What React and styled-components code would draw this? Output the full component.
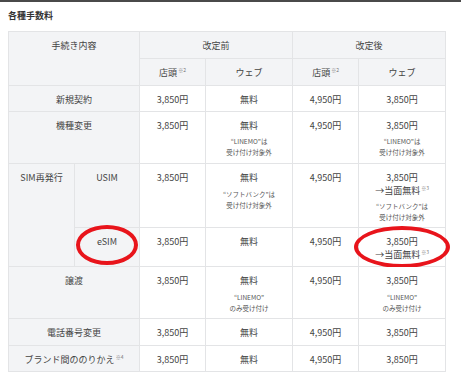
import React from 'react';
import styled, { createGlobalStyle } from 'styled-components';

const GlobalStyle = createGlobalStyle`
  body {
    margin: 0;
    background: #ffffff;
    font-family: "Noto Sans CJK JP", "Noto Sans", sans-serif;
    color: #3a3a3a;
  }
`;

const Page = styled.div`
  width: 461px;
  height: 380px;
  border-top: 2px solid #4a4a4a;
  box-sizing: border-box;
  padding: 7px 16px 0 8px;
  overflow: hidden;
`;

const Title = styled.h2`
  margin: 0 0 8px;
  font-size: 9px;
  line-height: 14px;
  font-weight: 700;
  color: #333;
`;

const Table = styled.table`
  width: 437px;
  border-collapse: collapse;
  table-layout: fixed;
`;

const Row = styled.tr`
  height: ${(p) => p.$h}px;
`;

const Cell = styled.td`
  position: relative;
  box-sizing: border-box;
  padding: ${(p) => (p.$head ? 7 : 7)}px 2px 0;
  vertical-align: top;
  text-align: center;
  font-size: 9px;
  line-height: 13px;
  color: #444;
  background: ${(p) => (p.$gray ? '#f3f4f6' : '#ffffff')};
  border: 1px solid #e3e4e6;
  white-space: nowrap;
`;

const Sup = styled.sup`
  font-size: 5px;
  line-height: 0;
  vertical-align: 4px;
  margin-left: 1px;
  color: #777;
`;

const Note = styled.div`
  margin-top: ${(p) => p.$gap || 5}px;
  font-size: 6.5px;
  line-height: 10.5px;
  color: #555;
`;

const Ring = styled.span`
  position: absolute;
  top: ${(p) => p.$t}px;
  left: ${(p) => p.$l}px;
  right: ${(p) => p.$r}px;
  bottom: ${(p) => p.$b}px;
  border: 4px solid #e8141b;
  border-radius: 50%;
  pointer-events: none;
`;

const Web = ({ note, gap }) => (
  <>
    無料
    {note && <Note $gap={gap}>{note}</Note>}
  </>
);

export default function App() {
  const linemoOut = (
    <>
      “LINEMO”は<br />受け付け対象外
    </>
  );
  const sbOut = (
    <>
      “ソフトバンク”は<br />受け付け対象外
    </>
  );
  const linemoOnly = (
    <>
      “LINEMO”<br />のみ受け付け
    </>
  );

  return (
    <>
      <GlobalStyle />
      <Page>
        <Title>各種手数料</Title>
        <Table>
          <colgroup>
            <col style={{ width: 66 }} />
            <col style={{ width: 65 }} />
            <col style={{ width: 66 }} />
            <col style={{ width: 87 }} />
            <col style={{ width: 66 }} />
            <col style={{ width: 87 }} />
          </colgroup>
          <tbody>
            <Row $h={27}>
              <Cell $gray colSpan={2} rowSpan={2}>手続き内容</Cell>
              <Cell $gray colSpan={2}>改定前</Cell>
              <Cell $gray colSpan={2}>改定後</Cell>
            </Row>
            <Row $h={27}>
              <Cell $gray>店頭<Sup>※2</Sup></Cell>
              <Cell $gray>ウェブ</Cell>
              <Cell $gray>店頭<Sup>※2</Sup></Cell>
              <Cell $gray>ウェブ</Cell>
            </Row>
            <Row $h={26}>
              <Cell $gray colSpan={2}>新規契約</Cell>
              <Cell>3,850円</Cell>
              <Cell>無料</Cell>
              <Cell>4,950円</Cell>
              <Cell>3,850円</Cell>
            </Row>
            <Row $h={52}>
              <Cell $gray colSpan={2}>機種変更</Cell>
              <Cell>3,850円</Cell>
              <Cell><Web note={linemoOut} gap={4} /></Cell>
              <Cell>4,950円</Cell>
              <Cell>3,850円<Note $gap={4}>{linemoOut}</Note></Cell>
            </Row>
            <Row $h={64}>
              <Cell $gray rowSpan={2}>SIM再発行</Cell>
              <Cell $gray>USIM</Cell>
              <Cell>3,850円</Cell>
              <Cell><Web note={sbOut} gap={5} /></Cell>
              <Cell>4,950円</Cell>
              <Cell>
                3,850円<br />→当面無料<Sup>※3</Sup>
                <Note $gap={4}>{sbOut}</Note>
              </Cell>
            </Row>
            <Row $h={39}>
              <Cell $gray>
                eSIM
                <Ring $t={-3} $l={1} $r={1} $b={1} />
              </Cell>
              <Cell>3,850円</Cell>
              <Cell>無料</Cell>
              <Cell>4,950円</Cell>
              <Cell>
                3,850円<br />→当面無料<Sup>※3</Sup>
                <Ring $t={-2} $l={-5} $r={-5} $b={-2} />
              </Cell>
            </Row>
            <Row $h={52}>
              <Cell $gray colSpan={2}>譲渡</Cell>
              <Cell>3,850円</Cell>
              <Cell><Web note={linemoOnly} gap={5} /></Cell>
              <Cell>4,950円</Cell>
              <Cell>3,850円<Note $gap={5}>{linemoOnly}</Note></Cell>
            </Row>
            <Row $h={27}>
              <Cell $gray colSpan={2}>電話番号変更</Cell>
              <Cell>3,850円</Cell>
              <Cell>無料</Cell>
              <Cell>4,950円</Cell>
              <Cell>3,850円</Cell>
            </Row>
            <Row $h={26}>
              <Cell $gray colSpan={2}>ブランド間ののりかえ<Sup>※4</Sup></Cell>
              <Cell>3,850円</Cell>
              <Cell>無料</Cell>
              <Cell>4,950円</Cell>
              <Cell>3,850円</Cell>
            </Row>
          </tbody>
        </Table>
      </Page>
    </>
  );
}
